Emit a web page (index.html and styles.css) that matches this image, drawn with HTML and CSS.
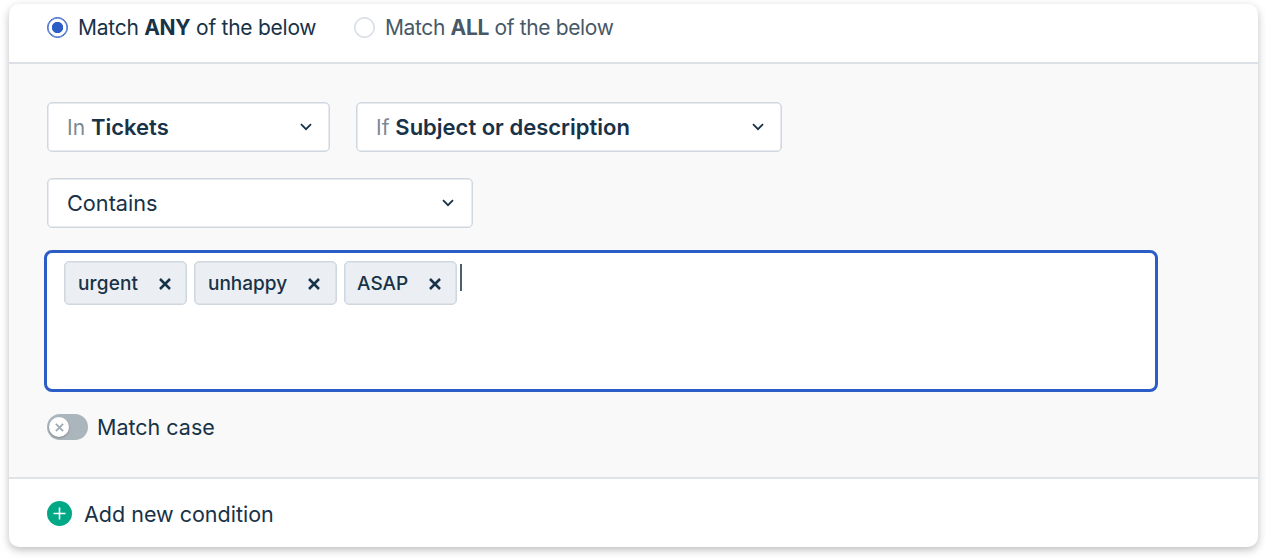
FILE: index.html
```html
<!DOCTYPE html>
<html lang="en">
<head>
<meta charset="utf-8">
<title>Conditions</title>
<link rel="stylesheet" href="styles.css">
</head>
<body>
<main class="card">
  <header class="match">
    <label class="option option-any"><span class="radio radio-on"></span><span class="t-any">Match <b>ANY</b> of the below</span></label>
    <label class="option option-all"><span class="radio"></span><span class="t-all">Match <b>ALL</b> of the below</span></label>
  </header>
  <section class="conditions">
    <div class="row">
      <div class="select select-in"><span><span class="prefix">In</span> <strong>Tickets</strong></span><svg class="chevron" viewBox="0 0 12 8"><path d="M1 1.2 6 6.2 11 1.2"/></svg></div>
      <div class="select select-if"><span><span class="prefix">If</span> <strong>Subject or description</strong></span><svg class="chevron" viewBox="0 0 12 8"><path d="M1 1.2 6 6.2 11 1.2"/></svg></div>
    </div>
    <div class="select select-op"><span class="t-contains">Contains</span><svg class="chevron" viewBox="0 0 12 8"><path d="M1 1.2 6 6.2 11 1.2"/></svg></div>
    <div class="keywords">
      <span class="chip chip-1"><span>urgent</span><svg class="close" viewBox="0 0 12 12"><path d="M1 1 11 11M11 1 1 11"/></svg></span>
      <span class="chip chip-2"><span>unhappy</span><svg class="close" viewBox="0 0 12 12"><path d="M1 1 11 11M11 1 1 11"/></svg></span>
      <span class="chip chip-3"><span>ASAP</span><svg class="close" viewBox="0 0 12 12"><path d="M1 1 11 11M11 1 1 11"/></svg></span>
      <span class="caret"></span>
    </div>
    <div class="case">
      <span class="toggle"><span class="knob"><svg viewBox="0 0 10 10"><path d="M1 1 9 9M9 1 1 9"/></svg></span></span>
      <span class="t-case">Match case</span>
    </div>
  </section>
  <footer class="add">
    <svg class="plus" viewBox="0 0 26 26"><circle cx="13.5" cy="12.5" r="12.5"/><path d="M13.5 6.5v12M7.5 12.5h12"/></svg>
    <span class="t-add">Add new condition</span>
  </footer>
</main>
</body>
</html>
```
FILE: styles.css
```css
* { box-sizing: border-box; }
body {
  margin: 0;
  height: 560px;
  overflow: hidden;
  background: #fff;
  color: #183247;
  font: 400 21px/28px Inter, "Liberation Sans", sans-serif;
  white-space: nowrap;
}
.card {
  width: 1249px;
  height: 543px;
  margin: 4px 0 0 9px;
  border-radius: 10px;
  overflow: hidden;
  background: #fff;
  box-shadow: 0 3px 9px rgba(0, 0, 0, .26);
}
.match {
  display: flex;
  height: 60px;
  padding: 9px 0 0 38px;
  border-bottom: 2px solid #dbe1e6;
}
.option { display: flex; align-items: center; height: 28px; }
.option-any { width: 307px; gap: 10px; letter-spacing: -.26px; }
.option-all { gap: 10px; color: #475867; letter-spacing: -.36px; }
.t-any, .t-all, .chip > span { padding-top: 2px; }
.radio {
  flex: none;
  width: 21px;
  height: 21px;
  border: 1px solid #cfd7df;
  border-radius: 50%;
  background: #fff;
  box-shadow: inset 0 0 0 .5px #cfd7df;
}
.radio-on {
  border-color: #2c5cc5;
  background: radial-gradient(circle, #2c5cc5 5.3px, #fff 6px);
  box-shadow: inset 0 0 0 .5px #2c5cc5;
}
b { font-weight: 700; }
.conditions {
  height: 415px;
  padding: 38px 0 0 38px;
  border-bottom: 2px solid #dee3e7;
  background: #f9f9f9;
}
.row { display: flex; gap: 26px; margin-bottom: 26px; }
.select {
  display: flex;
  align-items: center;
  justify-content: space-between;
  height: 50px;
  padding: 0 17px 0 19px;
  border: 1px solid #cfd7df;
  border-radius: 5px;
  background: #fff;
  box-shadow: inset 0 0 0 .5px #cfd7df;
}
.select-in { width: 283px; }
.select-if { width: 426px; }
.select-op { width: 426px; padding-right: 18px; }
.prefix { color: #7b8896; }
.select strong { font-size: 22px; font-weight: 600; }
.t-contains { font-size: 21.7px; }
.chevron { width: 12px; height: 8px; fill: none; stroke: #183247; stroke-width: 1.8; }
.keywords {
  display: flex;
  align-items: flex-start;
  width: 1114px;
  height: 142px;
  margin: 22px 0 0 -3px;
  padding: 8px 0 0 17px;
  border: 3px solid #2c5cc5;
  border-radius: 8px;
  background: #fff;
}
.chip {
  display: flex;
  align-items: center;
  justify-content: space-between;
  height: 44px;
  padding: 0 15px 0 13px;
  border: 1px solid #cfd7df;
  border-radius: 5px;
  background: #ebeef2;
  box-shadow: inset 0 0 0 .5px #cfd7df;
  font-size: 19px;
  font-weight: 500;
}
.chip-1 { width: 123px; margin-right: 7px; letter-spacing: .15px; }
.chip-2 { width: 143px; margin-right: 7px; padding-right: 16px; }
.chip-3 { width: 113px; margin-right: 3px; padding-left: 12px; }
.close { width: 12px; height: 12px; margin-top: 2px; fill: none; stroke: #183247; stroke-width: 2.5; }
.caret { width: 2px; height: 27px; margin-top: 3px; background: #4a5f70; }
.case { display: flex; align-items: center; gap: 9px; margin-top: 21px; }
.t-case { font-size: 21.5px; }
.toggle {
  display: flex;
  align-items: center;
  width: 41px;
  height: 26px;
  padding-left: 2px;
  border-radius: 13px;
  background: #abb5bc;
}
.knob {
  display: flex;
  align-items: center;
  justify-content: center;
  width: 20px;
  height: 20px;
  border-radius: 50%;
  background: #fff;
  box-shadow: 0 1px 2px rgba(0, 0, 0, .25);
}
.knob svg { width: 9px; height: 9px; margin-top: 1px; fill: none; stroke: #a3adb5; stroke-width: 2.2; }
.add { display: flex; align-items: center; gap: 12px; height: 68px; padding: 2px 0 0 37px; }
.t-add { font-size: 21.5px; }
.plus { width: 26px; height: 26px; fill: #00a886; stroke: none; }
.plus path { stroke: #fff; stroke-width: 1.6; }
```
